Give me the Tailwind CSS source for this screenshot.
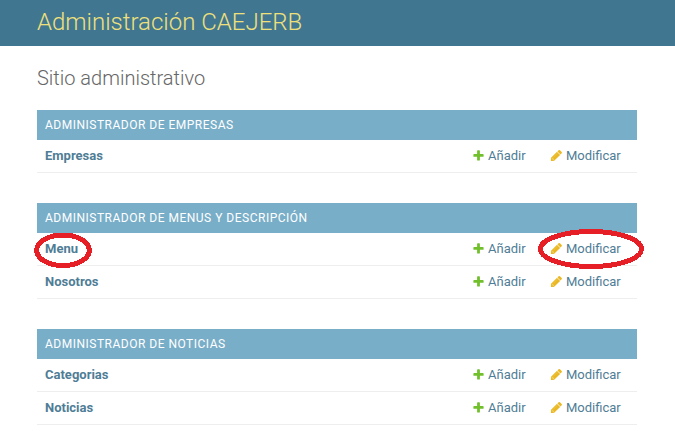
<!DOCTYPE html>
<html lang="es">
<head>
<meta charset="utf-8">
<title>Administración CAEJERB</title>
<script src="https://cdn.jsdelivr.net/npm/@tailwindcss/browser@4"></script>
</head>
<body class="relative h-[446px] overflow-hidden bg-white font-['Roboto','Liberation_Sans',sans-serif] text-[13px] text-[#4f7d96]">
<svg class="hidden">
  <symbol id="add" viewBox="0 0 1792 1792"><path fill="#70bf2b" d="M1600 796v192q0 40-28 68t-68 28h-416v416q0 40-28 68t-68 28h-192q-40 0-68-28t-28-68v-416h-416q-40 0-68-28t-28-68v-192q0-40 28-68t68-28h416v-416q0-40 28-68t68-28h192q40 0 68 28t28 68v416h416q40 0 68 28t28 68z"/></symbol>
  <symbol id="edit" viewBox="0 0 1792 1792"><path fill="#f3d061" d="M960 416l416 416-832 704h-288v-416z"/><path fill="#e9b824" d="M491 1536l91-91-235-235-91 91v107h128v128h107zm523-928q0-22-22-22-10 0-17 7l-542 542q-7 7-7 17 0 22 22 22 10 0 17-7l542-542q7-7 7-17zm-54-192l416 416-832 832h-416v-416zm683 96q0 53-37 90l-166 166-416-416 166-165q36-38 90-38 53 0 91 38l235 234q37 39 37 91z"/></symbol>
</svg>
<header class="flex h-[46px] items-center bg-[#417690] px-[37px] pb-[2px]">
  <h1 class="text-[24px] leading-[28px] font-light text-[#efe07c]">Administración CAEJERB</h1>
</header>
<main class="w-[637px] pl-[37px] pt-5">
  <h2 class="mb-5 text-[20px] leading-6 font-light text-[#666]">Sitio administrativo</h2>
  <section class="mb-[30px]">
    <h3 class="h-[30px] bg-[#79aec8] px-2 text-[12px] leading-[30px] tracking-[0.5px] text-white">ADMINISTRADOR DE EMPRESAS</h3>
    <div class="flex h-[33px] items-center border-b border-[#eee] pl-2 leading-4"><a class="flex-1 font-bold">Empresas</a><a class="flex w-[78px] gap-[3px]"><svg class="mt-[1px] size-[13px]"><use href="#add"/></svg>Añadir</a><a class="flex w-[87px] gap-[3px]"><svg class="mt-[1px] size-[13px]"><use href="#edit"/></svg>Modificar</a></div>
  </section>
  <section class="mb-[30px]">
    <h3 class="h-[30px] bg-[#79aec8] px-2 text-[12px] leading-[30px] tracking-[0.5px] text-white">ADMINISTRADOR DE MENUS Y DESCRIPCIÓN</h3>
    <div class="flex h-[33px] items-center border-b border-[#eee] pl-2 leading-4"><a class="flex-1 font-bold">Menu</a><a class="flex w-[78px] gap-[3px]"><svg class="mt-[1px] size-[13px]"><use href="#add"/></svg>Añadir</a><a class="flex w-[87px] gap-[3px]"><svg class="mt-[1px] size-[13px]"><use href="#edit"/></svg>Modificar</a></div>
    <div class="flex h-[33px] items-center border-b border-[#eee] pl-2 leading-4"><a class="flex-1 font-bold">Nosotros</a><a class="flex w-[78px] gap-[3px]"><svg class="mt-[1px] size-[13px]"><use href="#add"/></svg>Añadir</a><a class="flex w-[87px] gap-[3px]"><svg class="mt-[1px] size-[13px]"><use href="#edit"/></svg>Modificar</a></div>
  </section>
  <section>
    <h3 class="h-[30px] bg-[#79aec8] px-2 text-[12px] leading-[30px] tracking-[0.5px] text-white">ADMINISTRADOR DE NOTICIAS</h3>
    <div class="flex h-[33px] items-center border-b border-[#eee] pl-2 leading-4"><a class="flex-1 font-bold">Categorias</a><a class="flex w-[78px] gap-[3px]"><svg class="mt-[1px] size-[13px]"><use href="#add"/></svg>Añadir</a><a class="flex w-[87px] gap-[3px]"><svg class="mt-[1px] size-[13px]"><use href="#edit"/></svg>Modificar</a></div>
    <div class="flex h-[33px] items-center border-b border-[#eee] pl-2 leading-4"><a class="flex-1 font-bold">Noticias</a><a class="flex w-[78px] gap-[3px]"><svg class="mt-[1px] size-[13px]"><use href="#add"/></svg>Añadir</a><a class="flex w-[87px] gap-[3px]"><svg class="mt-[1px] size-[13px]"><use href="#edit"/></svg>Modificar</a></div>
  </section>
</main>
<!-- Hand-drawn highlight rings -->
<svg class="pointer-events-none absolute top-0 left-0" width="675" height="446" fill="none" stroke="#e61e25" stroke-width="5" shape-rendering="crispEdges">
  <ellipse cx="63" cy="250.3" rx="26.3" ry="15.3"/>
  <ellipse cx="591" cy="249" rx="50.5" ry="17.5"/>
</svg>
</body>
</html>
